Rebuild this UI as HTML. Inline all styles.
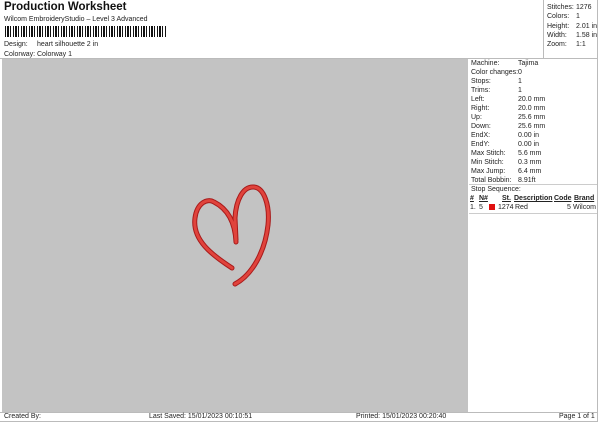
<!DOCTYPE html>
<html><head><style>
*{margin:0;padding:0;box-sizing:border-box}
body{width:600px;height:424px;background:#fff;font-family:"Liberation Sans",Arial,sans-serif;font-size:7px;color:#222;position:relative;overflow:hidden}
.a{position:absolute;white-space:nowrap}
</style></head><body>
<div class="a" style="left:4px;top:1px;font-size:11.5px;font-weight:bold;color:#111">Production Worksheet</div>
<div class="a" style="left:4px;top:16px">Wilcom EmbroideryStudio – Level 3 Advanced</div>
<div class="a" style="left:5px;top:26px;width:162px;height:11px;background:repeating-linear-gradient(90deg,#111 0 1px,#fff 1px 2px,#111 2px 4px,#fff 4px 5px,#111 5px 6px,#fff 6px 8px)"></div>
<div class="a" style="left:4px;top:41px">Design:</div><div class="a" style="left:37px;top:41px">heart silhouette 2 in</div>
<div class="a" style="left:4px;top:51px">Colorway:</div><div class="a" style="left:37px;top:51px">Colorway 1</div>
<div class="a" style="left:543px;top:0;width:1px;height:58px;background:#bbb"></div>
<div class="a" style="left:597px;top:0;width:1px;height:421px;background:#bbb"></div>
<div class="a" style="left:547px;top:3px;line-height:9.3px">Stitches:<br>Colors:<br>Height:<br>Width:<br>Zoom:</div>
<div class="a" style="left:576px;top:3px;line-height:9.3px">1276<br>1<br>2.01 in<br>1.58 in<br>1:1</div>
<div class="a" style="left:0;top:58px;width:598px;height:1px;background:#bbb"></div>
<div class="a" style="left:2px;top:59px;width:466px;height:353px;background:#c3c3c3"></div>
<div class="a" style="left:471px;top:59px;line-height:9px">Machine:<br>Color changes:<br>Stops:<br>Trims:<br>Left:<br>Right:<br>Up:<br>Down:<br>EndX:<br>EndY:<br>Max Stitch:<br>Min Stitch:<br>Max Jump:<br>Total Bobbin:<br>Stop Sequence:</div>
<div class="a" style="left:518px;top:59px;line-height:9px">Tajima<br>0<br>1<br>1<br>20.0 mm<br>20.0 mm<br>25.6 mm<br>25.6 mm<br>0.00 in<br>0.00 in<br>5.6 mm<br>0.3 mm<br>6.4 mm<br>8.91ft</div>
<div class="a" style="left:469px;top:184px;width:128px;height:1px;background:#ccc"></div>
<div class="a" style="left:469px;top:213px;width:128px;height:1px;background:#ccc"></div>
<div class="a" style="left:470px;top:195px;font-weight:bold;text-decoration:underline">#</div>
<div class="a" style="left:479px;top:195px;font-weight:bold;text-decoration:underline">N#</div>
<div class="a" style="left:502px;top:195px;font-weight:bold;text-decoration:underline">St.</div>
<div class="a" style="left:514px;top:195px;font-weight:bold;text-decoration:underline">Description</div>
<div class="a" style="left:554px;top:195px;font-weight:bold;text-decoration:underline">Code</div>
<div class="a" style="left:574px;top:195px;font-weight:bold;text-decoration:underline">Brand</div>
<div class="a" style="left:470px;top:204px">1.</div><div class="a" style="left:479px;top:204px">5</div>
<div class="a" style="left:489px;top:204px;width:6px;height:6px;background:#e01010"></div>
<div class="a" style="left:498px;top:204px">1274</div><div class="a" style="left:515px;top:204px">Red</div>
<div class="a" style="left:567px;top:204px">5</div><div class="a" style="left:573px;top:204px">Wilcom</div>
<div class="a" style="left:0;top:412px;width:598px;height:1px;background:#bbb"></div>
<div class="a" style="left:0;top:421px;width:598px;height:1px;background:#bbb"></div>
<div class="a" style="left:4px;top:413px">Created By:</div>
<div class="a" style="left:149px;top:413px">Last Saved: 15/01/2023 00:10:51</div>
<div class="a" style="left:356px;top:413px">Printed: 15/01/2023 00:20:40</div>
<div class="a" style="left:559px;top:413px">Page 1 of 1</div>
<svg class="a" style="left:0;top:0" width="600" height="424">
<g fill="none" stroke-linecap="round">
<path d="M232 268 C212 255 192 240 195 218 C197 203 207 198 214 202 C226 208 235 220 236 242 M236 240 L235 218 C236 200 243 186 254 187 C264 188 270 205 268 225 C265 252 252 275 235 284" stroke="#a81a1a" stroke-width="5"/>
<path d="M232 268 C212 255 192 240 195 218 C197 203 207 198 214 202 C226 208 235 220 236 242 M236 240 L235 218 C236 200 243 186 254 187 C264 188 270 205 268 225 C265 252 252 275 235 284" stroke="#e0433c" stroke-width="3"/>
</g></svg>
</body></html>
